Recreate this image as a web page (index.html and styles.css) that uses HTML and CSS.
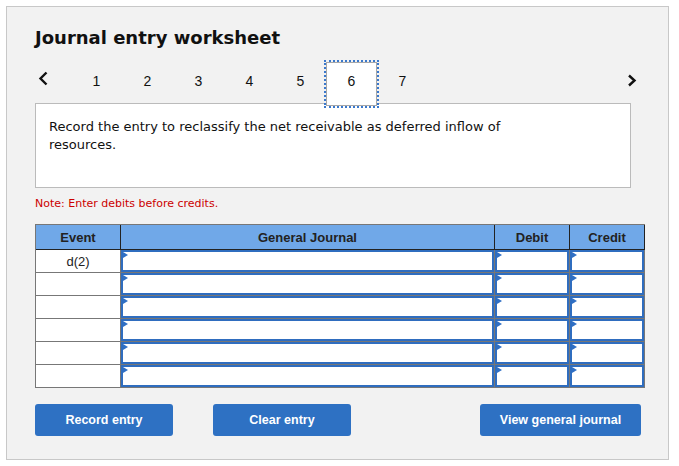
FILE: index.html
```html
<!DOCTYPE html>
<html lang="en">
<head>
  <meta charset="UTF-8" />
  <title>Journal entry worksheet</title>
  <link rel="stylesheet" href="styles.css">
</head>
<body>

  <div class="panel">
    <h1 class="title">Journal entry worksheet</h1>

    <!-- step tabs -->
    <div class="steps">
      <div class="arrow prev">
        <svg width="10" height="15" viewBox="0 0 10 15"><path d="M8.5 1.5 L2.5 7.5 L8.5 13.5" fill="none" stroke="#111" stroke-width="2.4"/></svg>
      </div>
      <div class="step">1</div>
      <div class="step">2</div>
      <div class="step">3</div>
      <div class="step">4</div>
      <div class="step">5</div>
      <div class="step active">6</div>
      <div class="step">7</div>
      <div class="arrow next">
        <svg width="10" height="13" viewBox="0 0 10 13"><path d="M2 1.5 L7.5 6.5 L2 11.5" fill="none" stroke="#111" stroke-width="2.4"/></svg>
      </div>
    </div>

    <div class="question">
      Record the entry to reclassify the net receivable as deferred inflow of resources.
    </div>

    <p class="note">Note: Enter debits before credits.</p>

    <table class="journal">
      <thead>
        <tr>
          <th class="col-event">Event</th>
          <th class="col-account">General Journal</th>
          <th class="col-amount">Debit</th>
          <th class="col-amount">Credit</th>
        </tr>
      </thead>
      <tbody>
        <tr>
          <td class="event">d(2)</td>
          <td class="entry"><input></td>
          <td class="entry"><input></td>
          <td class="entry"><input></td>
        </tr>
        <tr>
          <td class="event"></td>
          <td class="entry"><input></td>
          <td class="entry"><input></td>
          <td class="entry"><input></td>
        </tr>
        <tr>
          <td class="event"></td>
          <td class="entry"><input></td>
          <td class="entry"><input></td>
          <td class="entry"><input></td>
        </tr>
        <tr>
          <td class="event"></td>
          <td class="entry"><input></td>
          <td class="entry"><input></td>
          <td class="entry"><input></td>
        </tr>
        <tr>
          <td class="event"></td>
          <td class="entry"><input></td>
          <td class="entry"><input></td>
          <td class="entry"><input></td>
        </tr>
        <tr>
          <td class="event"></td>
          <td class="entry"><input></td>
          <td class="entry"><input></td>
          <td class="entry"><input></td>
        </tr>
      </tbody>
    </table>

    <div class="actions">
      <button class="btn btn-record">Record entry</button>
      <button class="btn btn-clear">Clear entry</button>
      <button class="btn btn-view">View general journal</button>
    </div>
  </div>

</body>
</html>
```

FILE: styles.css
```css
body {
  margin: 6px;
  font-family: "DejaVu Sans", Verdana, sans-serif;
  color: #111;
}

.panel {
  box-sizing: border-box;
  width: 663px;
  height: 454px;
  padding: 20px 27px 0 28px;
  border: 1px solid #c8c8c8;
  background: #f2f2f2;
}

.title {
  margin: 0;
  font-size: 18px;
  line-height: 22px;
  font-weight: bold;
}

.steps {
  display: flex;
  height: 41px;
  width: 602px;
  margin-top: 13px;
}

.arrow {
  width: 36px;
  padding-top: 9px;
  box-sizing: border-box;
}

.prev svg {
  margin-left: 3px;
}

.next {
  margin-left: auto;
  width: 10px;
  padding-top: 10px;
}

.step {
  box-sizing: border-box;
  width: 51px;
  height: 44px;
  padding-top: 9px;
  text-align: center;
  font-family: "Liberation Sans", Arial, sans-serif;
  font-size: 14px;
  line-height: 18px;
  border: 1px solid transparent;
}

.step.active {
  position: relative;
  z-index: 1;
  background: #fff;
  border-color: #a8a8a8;
  outline: 2px dotted #3a78cc;
}

.question {
  box-sizing: border-box;
  width: 596px;
  height: 85px;
  padding: 14px 80px 14px 13px;
  border: 1px solid #bbb;
  background: #fff;
  font-size: 13px;
  line-height: 18px;
}

.note {
  margin: 9px 0 0;
  color: #cc0000;
  font-size: 11px;
  line-height: 13px;
}

.journal {
  width: 610px;
  table-layout: fixed;
  margin-top: 14px;
  border-collapse: separate;
  border-spacing: 0;
  border-left: 1px solid #777;
  border-top: 1px solid #777;
  font-family: "Liberation Sans", Arial, sans-serif;
  font-size: 13px;
}

.journal th {
  height: 24px;
  padding: 0;
  background: #70a8e8;
  color: #222;
  font-weight: bold;
  border-right: 1px solid #222;
  border-bottom: 1px solid #222;
}

.col-event { width: 84px; }
.col-account { width: 373px; }
.col-amount { width: 74px; }

.journal td {
  height: 22px;
  padding: 0;
  border-right: 1px solid #777;
  border-bottom: 1px solid #777;
  background: #fff;
}

.event {
  text-align: center;
  color: #222;
}

.entry {
  position: relative;
}

.entry::before {
  content: "";
  position: absolute;
  left: 2px;
  top: 2px;
  border-left: 5px solid #2f6fc4;
  border-top: 3px solid transparent;
  border-bottom: 3px solid transparent;
}

.entry input {
  display: block;
  box-sizing: border-box;
  width: 100%;
  height: 22px;
  margin: 0;
  border: 2px solid #2f6dbf;
  background: #fff;
}

.actions {
  display: flex;
  gap: 40px;
  margin-top: 16px;
}

.btn {
  height: 32px;
  border: none;
  border-radius: 3px;
  background: #2e71c3;
  color: #fff;
  font-family: "Liberation Sans", Arial, sans-serif;
  font-size: 12.5px;
  font-weight: bold;
  cursor: pointer;
}

.btn-record,
.btn-clear {
  width: 138px;
}

.btn-view {
  width: 161px;
  margin-left: auto;
}
```
